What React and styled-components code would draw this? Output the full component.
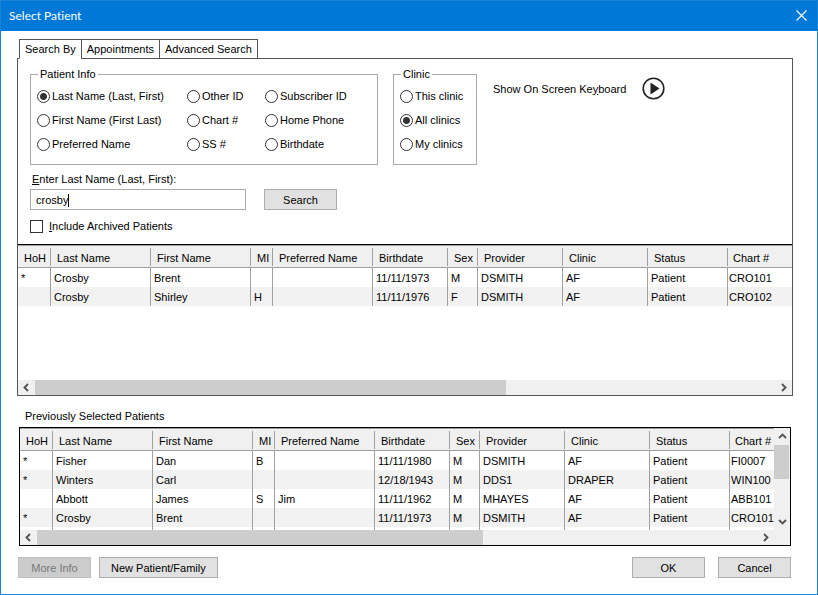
import React, { useState } from "react";
import styled, { createGlobalStyle } from "styled-components";

const GlobalStyle = createGlobalStyle`
  *, *::before, *::after { box-sizing: border-box; }
  body { margin: 0; background: #fff; }
  body, button, input {
    font-family: "Liberation Sans", Arial, sans-serif;
    font-size: 11px;
    line-height: 16px;
    color: #000;
  }
`;

const Window = styled.main`
  display: flex;
  flex-direction: column;
  min-height: 100vh;
  border: 1px solid #1883d7;
  background: #fff;
`;

const TitleBar = styled.header`
  display: flex;
  align-items: center;
  justify-content: space-between;
  height: 30px;
  padding: 0 9px 0 8px;
  background: #0078d7;
`;

const Title = styled.h1`
  margin: 0;
  font: 400 12px/16px Lato, "Open Sans", sans-serif;
  font-variant-ligatures: none;
  color: #fff;
`;

const CloseButton = styled.button`
  display: flex;
  padding: 0 1px 2px;
  border: 0;
  background: transparent;
`;

const Content = styled.div`
  display: flex;
  flex: 1;
  flex-direction: column;
  padding: 8px 24px 16px 16px;
`;

const TabList = styled.div`
  display: flex;
  margin: 0 0 -1px 2px;
  z-index: 1;
`;

const Tab = styled.button`
  height: 20px;
  padding: 0 5px;
  margin-right: -1px;
  border: 1px solid #555;
  border-bottom-color: ${(p) => (p.$active ? "#fff" : "#555")};
  background: #fff;
  white-space: nowrap;
`;

const Panel = styled.section`
  display: flex;
  flex: 1;
  flex-direction: column;
  border: 1px solid #555;
`;

const SearchForm = styled.form`
  display: flex;
  flex-direction: column;
  align-items: flex-start;
  padding: 7px 12px 10px;
`;

const Criteria = styled.div`
  display: flex;
  align-items: flex-start;
  gap: 15px;
`;

const Group = styled.fieldset`
  min-width: 0;
  width: ${(p) => p.$width}px;
  height: 99px;
  margin: 0;
  padding: 2px 0 0 6px;
  border: 1px solid #aaa;
`;

const Legend = styled.legend`
  margin-left: 1px;
  padding: 0 2px;
`;

const Options = styled.div`
  display: grid;
  grid-template-columns: ${(p) => p.$columns};
  grid-auto-rows: 24px;
  grid-auto-flow: row;
  align-items: center;
`;

const Option = styled.label`
  display: flex;
  align-items: center;
  gap: 2px;
  white-space: nowrap;
`;

const Radio = styled.input`
  appearance: none;
  flex: none;
  width: 13px;
  height: 13px;
  margin: 0;
  border: 1px solid #333;
  border-radius: 50%;
  background: #fff;

  &:checked {
    background: radial-gradient(circle, #333 3px, #fff 4px);
  }
`;

const KeyboardLauncher = styled.div`
  display: flex;
  align-items: center;
  gap: 16px;
  padding: 11px 0 0 1px;
`;

const IconButton = styled.button`
  display: flex;
  padding: 0;
  border: 0;
  background: transparent;
`;

const NameLabel = styled.label`
  margin: 6px 0 2px 2px;
`;

const NameRow = styled.div`
  display: flex;
  align-items: flex-start;
  gap: 18px;
`;

const NameInput = styled.input`
  width: 216px;
  height: 21px;
  padding: 1px 5px 0;
  border: 1px solid #aaa;
  outline: 0;
  background: linear-gradient(#000, #000) 37px 4px / 1px 13px no-repeat #fff;
`;

const Archived = styled.label`
  display: flex;
  align-items: center;
  gap: 6px;
  margin-top: 8px;
`;

const CheckBox = styled.input`
  appearance: none;
  width: 13px;
  height: 13px;
  margin: 0;
  border: 1px solid #333;
  background: #fff;
`;

const Button = styled.button`
  min-width: 73px;
  height: 21px;
  padding: 0 11px;
  border: 1px solid #adadad;
  background: #e1e1e1;
  white-space: nowrap;

  &:disabled {
    border-color: #bfbfbf;
    background: #ccc;
    color: #777;
  }
`;

const ResultsList = styled.div`
  display: flex;
  flex: 1;
  flex-direction: column;
  border-top: 1px solid #000;
`;

const RecentList = styled.div`
  display: grid;
  grid-template: 102px 15px / minmax(0, 1fr) 16px;
  margin: 0 2px;
  border: 1px solid #000;
  background: #f0f0f0;
`;

const Viewport = styled.div`
  flex: 1;
  min-width: 0;
  overflow: hidden;
  border-top: 1px solid #a0a0a0;
  background: #fff;
`;

const Table = styled.table`
  width: 100%;
  border-collapse: separate;
  border-spacing: 0;
  table-layout: fixed;
`;

const Column = styled.col`
  width: ${(p) => (p.$width ? `${p.$width}px` : "auto")};
`;

const HeadCell = styled.th`
  height: 22px;
  padding: 2px 0 0 6px;
  border-bottom: 1px solid #a0a0a0;
  background: linear-gradient(#a0a0a0, #a0a0a0) right 2px / 1px 18px no-repeat #f0f0f0;
  font-weight: 400;
  text-align: left;
  white-space: nowrap;

  &:last-child { background: #f0f0f0; padding-left: 5px; }
`;

const Row = styled.tr`
  &:nth-child(even) { background: #f2f2f2; }
`;

const Cell = styled.td`
  height: 19px;
  padding: 0 0 0 3px;
  border-right: 1px solid #a0a0a0;
  white-space: nowrap;

  &:last-child { border-right: 0; padding-left: 1px; }
`;

const HorizontalBar = styled.div`
  display: grid;
  grid-template-columns: 17px minmax(0, 1fr) 17px;
  align-items: center;
  justify-items: center;
  height: 15px;
  background: #f0f0f0;
`;

const VerticalBar = styled.div`
  display: grid;
  grid-template-rows: 17px minmax(0, 1fr) 17px;
  justify-items: center;
  align-items: center;
  background: #f0f0f0;
`;

const Thumb = styled.div`
  place-self: start;
  width: ${(p) => p.$width};
  height: ${(p) => p.$height};
  background: #cdcdcd;
`;

const RecentTitle = styled.h2`
  margin: 12px 0 3px 8px;
  font-size: 11px;
  font-weight: 400;
  line-height: 16px;
`;

const Footer = styled.footer`
  display: flex;
  justify-content: space-between;
  margin: 11px 2px 0 1px;
`;

const ButtonGroup = styled.div`
  display: flex;
  gap: ${(p) => p.$gap}px;
`;

const ARROWS = {
  left: "M6 1 2.5 4.5 6 8",
  right: "M3 1 6.5 4.5 3 8",
  up: "M1 6 4.5 2.5 8 6",
  down: "M1 3 4.5 6.5 8 3",
};

const Arrow = ({ to }) => (
  <svg width="9" height="9" viewBox="0 0 9 9" aria-hidden="true">
    <path d={ARROWS[to]} fill="none" stroke="#555" strokeWidth="1.9" />
  </svg>
);

const HorizontalScroll = ({ thumb }) => (
  <HorizontalBar>
    <Arrow to="left" />
    <Thumb $width={thumb} $height="15px" />
    <Arrow to="right" />
  </HorizontalBar>
);

const COLUMNS = [
  ["HoH", 33], ["Last Name", 100], ["First Name", 100], ["MI", 22],
  ["Preferred Name", 100], ["Birthdate", 75], ["Sex", 30],
  ["Provider", 85], ["Clinic", 85], ["Status", 80], ["Chart #", 0],
];

const RESULTS = [
  ["*", "Crosby", "Brent", "", "", "11/11/1973", "M", "DSMITH", "AF", "Patient", "CRO101"],
  ["", "Crosby", "Shirley", "H", "", "11/11/1976", "F", "DSMITH", "AF", "Patient", "CRO102"],
];

const RECENT = [
  ["*", "Fisher", "Dan", "B", "", "11/11/1980", "M", "DSMITH", "AF", "Patient", "FI0007"],
  ["*", "Winters", "Carl", "", "", "12/18/1943", "M", "DDS1", "DRAPER", "Patient", "WIN100"],
  ["", "Abbott", "James", "S", "Jim", "11/11/1962", "M", "MHAYES", "AF", "Patient", "ABB101"],
  ["*", "Crosby", "Brent", "", "", "11/11/1973", "M", "DSMITH", "AF", "Patient", "CRO101"],
  ["", "", "", "", "", "", "", "", "", "", ""],
];

const PatientTable = ({ label, rows }) => (
  <Table aria-label={label}>
    <colgroup>
      {COLUMNS.map(([name, width]) => <Column key={name} $width={width} />)}
    </colgroup>
    <thead>
      <tr>
        {COLUMNS.map(([name]) => <HeadCell key={name} scope="col">{name}</HeadCell>)}
      </tr>
    </thead>
    <tbody>
      {rows.map((row, r) => (
        <Row key={r}>
          {row.map((value, c) => <Cell key={c}>{value}</Cell>)}
        </Row>
      ))}
    </tbody>
  </Table>
);

const RadioGroup = ({ name, title, width, columns, options, initial }) => {
  const [selected, setSelected] = useState(initial);
  return (
    <Group $width={width}>
      <Legend>{title}</Legend>
      <Options $columns={columns}>
        {options.map((option) => (
          <Option key={option}>
            <Radio
              type="radio"
              name={name}
              checked={selected === option}
              onChange={() => setSelected(option)}
            />
            {option}
          </Option>
        ))}
      </Options>
    </Group>
  );
};

const SEARCH_FIELDS = [
  "Last Name (Last, First)", "Other ID", "Subscriber ID",
  "First Name (First Last)", "Chart #", "Home Phone",
  "Preferred Name", "SS #", "Birthdate",
];

export default function App() {
  const [tab, setTab] = useState("Search By");
  return (
    <>
      <GlobalStyle />
      <Window>
        <TitleBar>
          <Title>Select Patient</Title>
          <CloseButton type="button" aria-label="Close">
            <svg width="11" height="11" viewBox="0 0 11 11">
              <path d="M.5.5l10 10M10.5.5l-10 10" stroke="#fff" strokeWidth="1.1" />
            </svg>
          </CloseButton>
        </TitleBar>
        <Content>
          <TabList role="tablist">
            {["Search By", "Appointments", "Advanced Search"].map((name) => (
              <Tab
                key={name}
                type="button"
                role="tab"
                aria-selected={tab === name}
                $active={tab === name}
                onClick={() => setTab(name)}
              >
                {name}
              </Tab>
            ))}
          </TabList>
          <Panel>
            <SearchForm onSubmit={(e) => e.preventDefault()}>
              <Criteria>
                <RadioGroup
                  name="field"
                  title="Patient Info"
                  width={348}
                  columns="150px 78px 1fr"
                  options={SEARCH_FIELDS}
                  initial="Last Name (Last, First)"
                />
                <RadioGroup
                  name="clinic"
                  title="Clinic"
                  width={84}
                  columns="1fr"
                  options={["This clinic", "All clinics", "My clinics"]}
                  initial="All clinics"
                />
                <KeyboardLauncher>
                  <span>Show On Screen Ke<u>y</u>board</span>
                  <IconButton type="button" aria-label="Show On Screen Keyboard">
                    <svg width="23" height="23" viewBox="0 0 23 23">
                      <circle cx="11.5" cy="11.5" r="10.3" fill="#fff" stroke="#222" strokeWidth="1.6" />
                      <path d="M8.5 5.5v12l9-6z" fill="#222" />
                    </svg>
                  </IconButton>
                </KeyboardLauncher>
              </Criteria>
              <NameLabel htmlFor="name"><u>E</u>nter Last Name (Last, First):</NameLabel>
              <NameRow>
                <NameInput id="name" type="text" defaultValue="crosby" />
                <Button type="submit">Search</Button>
              </NameRow>
              <Archived>
                <CheckBox type="checkbox" />
                <span><u>I</u>nclude Archived Patients</span>
              </Archived>
            </SearchForm>
            <ResultsList>
              <Viewport>
                <PatientTable label="Search results" rows={RESULTS} />
              </Viewport>
              <HorizontalScroll thumb="63.6%" />
            </ResultsList>
          </Panel>
          <RecentTitle>Previously Selected Patients</RecentTitle>
          <RecentList>
            <Viewport>
              <PatientTable label="Previously Selected Patients" rows={RECENT} />
            </Viewport>
            <VerticalBar>
              <Arrow to="up" />
              <Thumb $width="15px" $height="50%" />
              <Arrow to="down" />
            </VerticalBar>
            <HorizontalScroll thumb="62%" />
          </RecentList>
          <Footer>
            <ButtonGroup $gap={8}>
              <Button type="button" disabled>More Info</Button>
              <Button type="button">New Patient/Family</Button>
            </ButtonGroup>
            <ButtonGroup $gap={13}>
              <Button type="button">OK</Button>
              <Button type="button">Cancel</Button>
            </ButtonGroup>
          </Footer>
        </Content>
      </Window>
    </>
  );
}
